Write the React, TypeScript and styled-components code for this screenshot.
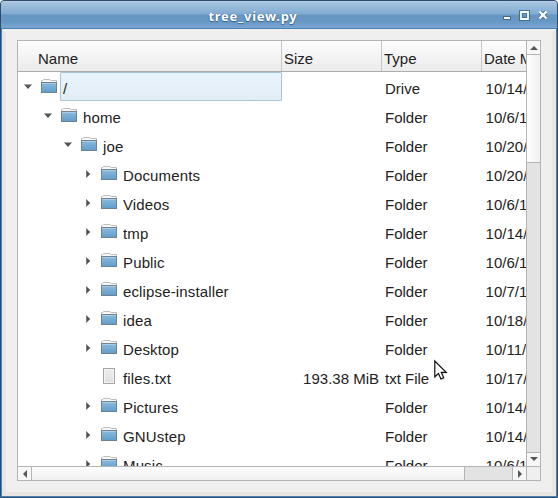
import React from "react";
import styled, { createGlobalStyle } from "styled-components";

const Global = createGlobalStyle`
  * { box-sizing: border-box; }
  html, body { margin: 0; padding: 0; background: #fff; overflow: hidden; }
`;

const Window = styled.div`
  width: 558px;
  height: 498px;
  display: flex;
  flex-direction: column;
  border: 1px solid #2f4d6b;
  border-radius: 4px 4px 0 0;
  background: #4584b9;
  overflow: hidden;
  font: 15px "Liberation Sans", Arial, sans-serif;
  color: #222;
`;

const TitleBar = styled.header`
  position: relative;
  flex: none;
  height: 28px;
  display: flex;
  align-items: center;
  justify-content: center;
  padding: 2px 52px 0 0;
  border-bottom: 1px solid #4a84b5;
  background: linear-gradient(#c3d7e9 0, #a9c5e0 1px, #80abd1 13px, #6696c1 14px, #6697c2 20px, #79a7d0 27px);
`;

const Title = styled.h1`
  margin: 0;
  font: bold 13px/18px "Noto Sans", "Open Sans", sans-serif;
  letter-spacing: 0.7px;
  color: #fff;
  text-shadow: 0 1px 1px #35608a, 0 0 1px #35608a;
`;

const Controls = styled.div`
  position: absolute;
  right: 9px;
  top: 7px;
  display: flex;
`;

const Client = styled.main`
  flex: 1;
  min-height: 0;
  margin: 0 1px 1px;
  padding: 7px 11px 11px;
  border: 4px solid #e9e6e2;
  border-top-color: #efefef;
  background: #efefef;
`;

const Panel = styled.section`
  width: 524px;
  height: 441px;
  display: grid;
  grid-template-columns: 508px 14px;
  grid-template-rows: 425px 14px;
  border: 1px solid #b4b4b4;
  background: #fff;
`;

const View = styled.div`
  overflow: hidden;
`;

const columns = "264px 100px 100px 100px";

const HeaderRow = styled.div`
  display: grid;
  grid-template-columns: ${columns};
  height: 31px;
  border-bottom: 1px solid #acacac;
  background: linear-gradient(#fdfdfd, #ebebeb);
`;

const HeaderCell = styled.div<{ $indent?: number }>`
  padding: 9px 0 0 ${(p) => p.$indent ?? 2}px;
  line-height: 18px;
  white-space: nowrap;
  border-right: 1px solid #c6c6c6;
`;

const Row = styled.div`
  display: grid;
  grid-template-columns: ${columns};
  height: 29px;
`;

const NameCell = styled.div<{ $depth: number }>`
  display: flex;
  padding-left: ${(p) => p.$depth * 20 + 3}px;
`;

const Label = styled.div<{ $selected?: boolean }>`
  flex: 1;
  margin-left: 3px;
  height: 29px;
  padding: 7px 0 0 2px;
  line-height: 18px;
  letter-spacing: 0.14px;
  white-space: nowrap;
  border: 1px solid ${(p) => (p.$selected ? "#a9c3d5" : "transparent")};
  border-radius: 1px;
  background: ${(p) => (p.$selected ? "linear-gradient(#e8f4fd, #e3edf4)" : "none")};
`;

const Cell = styled.div<{ $right?: boolean }>`
  padding: 8px 3px 0 3px;
  line-height: 18px;
  white-space: nowrap;
  text-align: ${(p) => (p.$right ? "right" : "left")};
`;

const DateCell = styled(Cell)`
  padding-left: 3.6px;
`;

const VBar = styled.div`
  display: grid;
  grid-template-rows: 13px 109px 289px 14px;
  border-left: 1px solid #b4b4b4;
  background: #e3e3e3;
`;

const HBar = styled.div`
  display: grid;
  grid-template-columns: 13px 434px 47px 14px;
  border-top: 1px solid #b4b4b4;
  background: #e3e3e3;
`;

const ArrowButton = styled.div<{ $edge?: "left" | "top" }>`
  display: flex;
  align-items: center;
  justify-content: center;
  background: #f7f7f7;
  ${(p) => p.$edge && `border-${p.$edge}: 1px solid #b4b4b4;`}
`;

const Thumb = styled.div<{ $vertical?: boolean }>`
  border: solid #b4b4b4;
  border-width: ${(p) => (p.$vertical ? "1px 0" : "0 1px")};
  background: linear-gradient(${(p) => (p.$vertical ? "to right" : "to bottom")}, #fefefe, #f0f0f0);
`;

const Track = styled.div``;

const Corner = styled.div`
  border: solid #b4b4b4;
  border-width: 1px 0 0 1px;
  background: #efefef;
`;

const Pointer = styled.svg`
  position: absolute;
  left: 433px;
  top: 359px;
`;

const Defs = styled.svg`
  position: absolute;
`;

type Direction = "up" | "down" | "left" | "right";
const arrowPaths: Record<Direction, string> = {
  up: "M0 6 4 2 8 6z",
  down: "M0 1h8L4 5z",
  left: "M6 0 2 4 6 8z",
  right: "M2 0 6 4 2 8z",
};

const Arrow = ({ direction }: { direction: Direction }) => (
  <svg width="8" height="8" viewBox="0 0 8 8">
    <path d={arrowPaths[direction]} fill="#555" />
  </svg>
);

const Expander = ({ state }: { state: "open" | "closed" | "none" }) => (
  <svg width="20" height="29" viewBox="0 0 20 29">
    {state === "open" && (
      <>
        <path d="M3.5 13h7L7 17z" fill="#555" />
        <path d="M3 12.5h8" stroke="#aaa" />
      </>
    )}
    {state === "closed" && (
      <>
        <path d="M5.5 11v8" stroke="#aaa" />
        <path d="M5.5 11.5 9.3 15l-3.8 3.5z" fill="#505050" />
      </>
    )}
  </svg>
);

const FolderIcon = () => (
  <svg width="16" height="29" viewBox="0 0 16 29">
    <path d="M.5 19V8.5h1.2l.8-1H9l.8 1h5.7V19" fill="#f8f8f8" stroke="#bdbdbd" />
    <rect x=".5" y="10.5" width="15" height="10" fill="url(#folder-blue)" stroke="#6f8291" />
    <path d="M1 11.5h14" stroke="#a9cce6" />
  </svg>
);

const FileIcon = () => (
  <svg width="16" height="29" viewBox="0 0 16 29">
    <rect x="2.5" y="6.5" width="11" height="15" fill="url(#paper)" stroke="#a5a5a5" />
    <rect x="3.5" y="7.5" width="9" height="13" fill="none" stroke="#f5f5f5" />
  </svg>
);

interface Entry {
  name: string;
  depth: number;
  kind: string;
  date: string;
  size?: string;
}

const entries: Entry[] = [
  { name: "/", depth: 0, kind: "Drive", date: "10/14/13" },
  { name: "home", depth: 1, kind: "Folder", date: "10/6/13" },
  { name: "joe", depth: 2, kind: "Folder", date: "10/20/13" },
  { name: "Documents", depth: 3, kind: "Folder", date: "10/20/13" },
  { name: "Videos", depth: 3, kind: "Folder", date: "10/6/13" },
  { name: "tmp", depth: 3, kind: "Folder", date: "10/14/13" },
  { name: "Public", depth: 3, kind: "Folder", date: "10/6/13" },
  { name: "eclipse-installer", depth: 3, kind: "Folder", date: "10/7/13" },
  { name: "idea", depth: 3, kind: "Folder", date: "10/18/13" },
  { name: "Desktop", depth: 3, kind: "Folder", date: "10/11/13" },
  { name: "files.txt", depth: 3, kind: "txt File", date: "10/17/13", size: "193.38 MiB" },
  { name: "Pictures", depth: 3, kind: "Folder", date: "10/14/13" },
  { name: "GNUstep", depth: 3, kind: "Folder", date: "10/14/13" },
  { name: "Music", depth: 3, kind: "Folder", date: "10/6/13" },
];

const TreeRow = ({ entry, selected }: { entry: Entry; selected: boolean }) => {
  const isFile = entry.size !== undefined;
  return (
    <Row>
      <NameCell $depth={entry.depth}>
        <Expander state={isFile ? "none" : entry.depth < 3 ? "open" : "closed"} />
        {isFile ? <FileIcon /> : <FolderIcon />}
        <Label $selected={selected}>{entry.name}</Label>
      </NameCell>
      <Cell $right>{entry.size}</Cell>
      <Cell>{entry.kind}</Cell>
      <DateCell>{entry.date}</DateCell>
    </Row>
  );
};

const WindowControls = () => (
  <Controls>
    <svg width="46" height="15" viewBox="0 0 46 15">
      <g fill="none" stroke="#2d5f8c" strokeOpacity=".75" strokeWidth="4">
        <path d="M1 10h8M19 4h7v7h-7zM38 4l6 6M44 4l-6 6" />
      </g>
      <g fill="none" stroke="#fff" strokeWidth="2">
        <path d="M2 10h6" />
        <path d="M19 4h7v7h-7z" strokeWidth="1.8" />
        <path d="M37.5 3.5l7 7M44.5 3.5l-7 7" strokeWidth="2.4" />
      </g>
    </svg>
  </Controls>
);

export default function App() {
  return (
    <>
      <Global />
      <Window>
        <Defs width="0" height="0">
          <defs>
            <linearGradient id="folder-blue" x1="0" y1="0" x2="0" y2="1">
              <stop offset="0" stopColor="#8ebbdc" />
              <stop offset="1" stopColor="#609dca" />
            </linearGradient>
            <linearGradient id="paper" x1="0" y1="0" x2="0" y2="1">
              <stop offset="0" stopColor="#eee" />
              <stop offset="1" stopColor="#ddd" />
            </linearGradient>
          </defs>
        </Defs>
        <TitleBar>
          <Title>tree_view.py</Title>
          <WindowControls />
        </TitleBar>
        <Client>
          <Panel>
            <View>
              <HeaderRow>
                <HeaderCell $indent={20}>Name</HeaderCell>
                <HeaderCell>Size</HeaderCell>
                <HeaderCell>Type</HeaderCell>
                <HeaderCell>Date Modified</HeaderCell>
              </HeaderRow>
              {entries.map((entry, index) => (
                <TreeRow key={entry.name} entry={entry} selected={index === 0} />
              ))}
            </View>
            <VBar>
              <ArrowButton><Arrow direction="up" /></ArrowButton>
              <Thumb $vertical />
              <Track />
              <ArrowButton $edge="top"><Arrow direction="down" /></ArrowButton>
            </VBar>
            <HBar>
              <ArrowButton><Arrow direction="left" /></ArrowButton>
              <Thumb />
              <Track />
              <ArrowButton $edge="left"><Arrow direction="right" /></ArrowButton>
            </HBar>
            <Corner />
          </Panel>
        </Client>
      </Window>
      <Pointer width="16" height="24" viewBox="0 0 16 24">
        <path d="M2 3v16l4-3.5 2.4 5.7 3-1.3L9 14.5h5z" fill="#888" opacity=".35" />
        <path d="M1.8 2v15.8l3.7-3.4 2.4 5.5 2.8-1.2-2.4-5.4h4.9z" fill="#fff" stroke="#111" strokeWidth="1.2" />
      </Pointer>
    </>
  );
}
